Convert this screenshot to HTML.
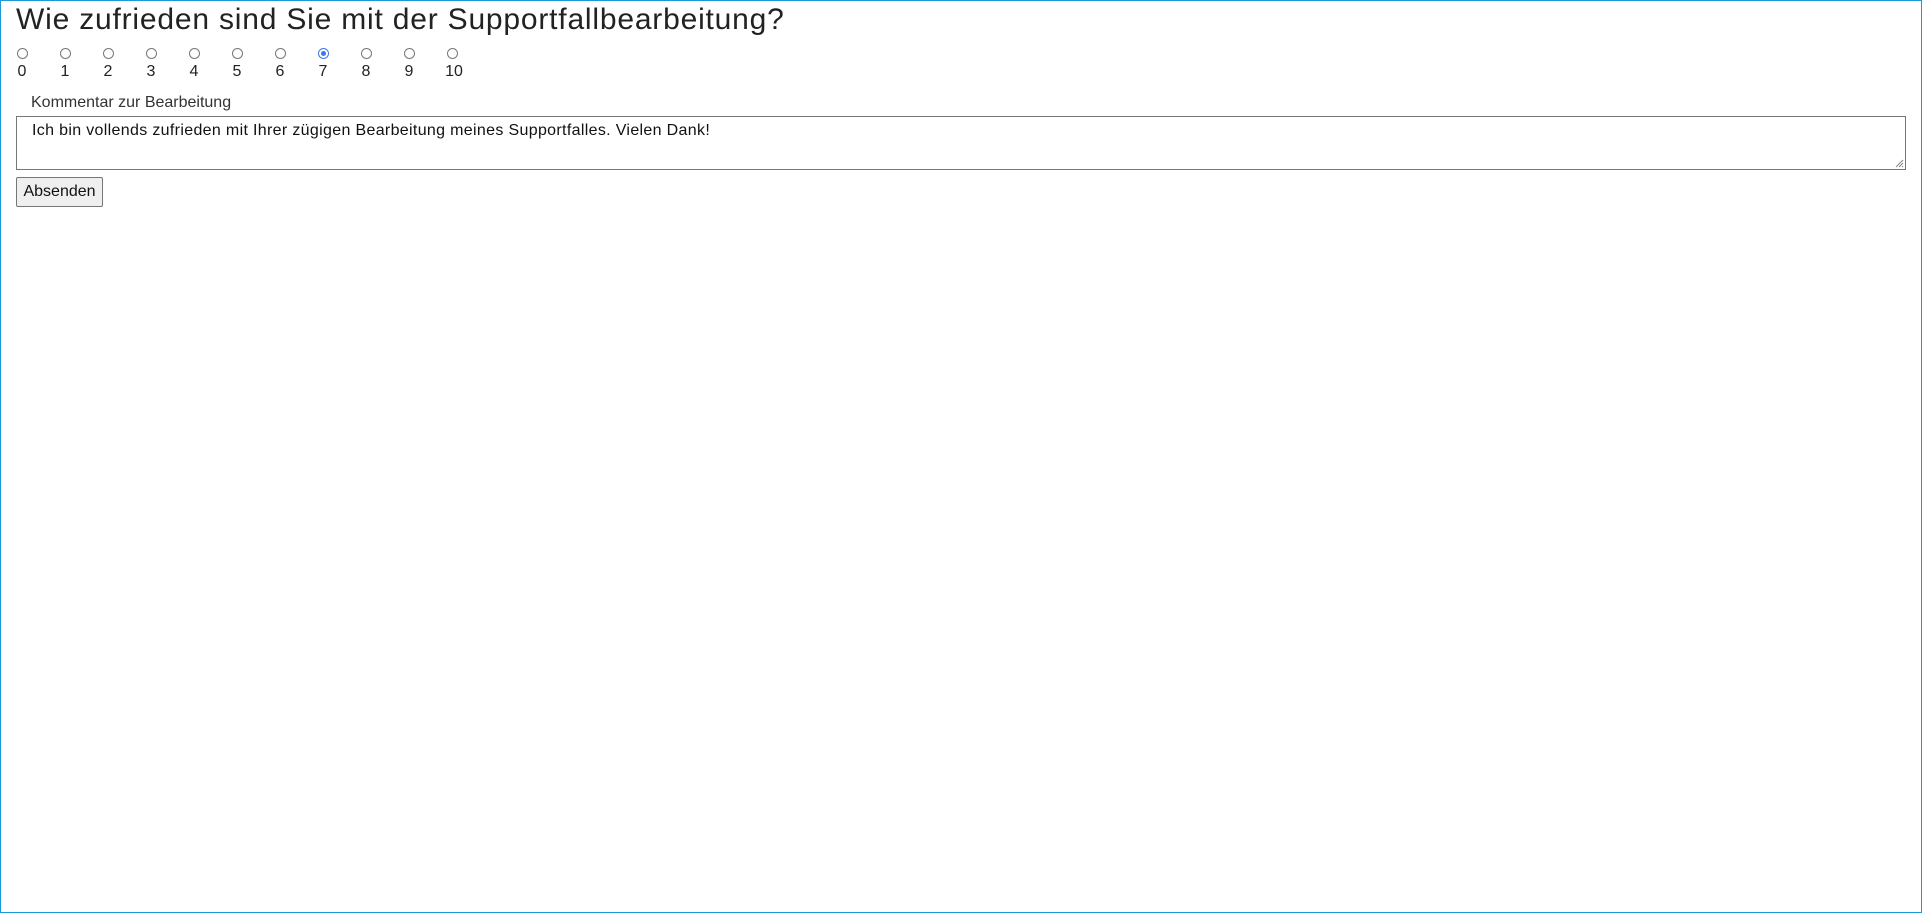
<!DOCTYPE html>
<html><head><meta charset="utf-8"><style>
html,body{margin:0;padding:0;}
body{width:1922px;height:913px;position:relative;background:#fff;font-family:"Liberation Sans",sans-serif;color:#222;overflow:hidden;}
.frame{position:absolute;left:0;top:0;width:1920px;height:911px;border:1px solid #1a9ad6;}
.t{position:absolute;white-space:nowrap;}
.r{position:absolute;width:11px;height:11px;border:1px solid #777;border-radius:50%;box-sizing:border-box;background:#fff;}
.r.on{border-color:#3b78e7;}
.r.on::after{content:"";position:absolute;left:2px;top:2px;width:5px;height:5px;border-radius:50%;background:#3b78e7;}
.n{position:absolute;top:63px;font-size:16px;width:20px;text-align:center;}
</style></head><body>
<div class="frame"></div>
<div class="t" style="left:16px;top:3px;font-size:30px;letter-spacing:0.8px;">Wie zufrieden sind Sie mit der Supportfallbearbeitung?</div>
<div class="r" style="left:17px;top:48px"></div><div class="n" style="left:12px">0</div>
<div class="r" style="left:60px;top:48px"></div><div class="n" style="left:55px">1</div>
<div class="r" style="left:103px;top:48px"></div><div class="n" style="left:98px">2</div>
<div class="r" style="left:146px;top:48px"></div><div class="n" style="left:141px">3</div>
<div class="r" style="left:189px;top:48px"></div><div class="n" style="left:184px">4</div>
<div class="r" style="left:232px;top:48px"></div><div class="n" style="left:227px">5</div>
<div class="r" style="left:275px;top:48px"></div><div class="n" style="left:270px">6</div>
<div class="r on" style="left:318px;top:48px"></div><div class="n" style="left:313px">7</div>
<div class="r" style="left:361px;top:48px"></div><div class="n" style="left:356px">8</div>
<div class="r" style="left:404px;top:48px"></div><div class="n" style="left:399px">9</div>
<div class="r" style="left:447px;top:48px"></div><div class="n" style="left:444px">10</div>
<div class="t" style="left:31px;top:94px;font-size:16px;color:#333;">Kommentar zur Bearbeitung</div>
<div style="position:absolute;left:16px;top:116px;width:1890px;height:54px;border:1px solid #767676;box-sizing:border-box;"></div>
<svg style="position:absolute;left:1895px;top:159px" width="9" height="9"><path d="M8 1L1 8M8 4L4 8M8 7L7 8" stroke="#888" stroke-width="1"/></svg>
<div class="t" style="left:32px;top:122px;font-size:16px;letter-spacing:0.33px;color:#111;">Ich bin vollends zufrieden mit Ihrer zügigen Bearbeitung meines Supportfalles. Vielen Dank!</div>
<div style="position:absolute;left:16px;top:177px;width:87px;height:30px;border:1px solid #767676;border-radius:2px;background:#efefef;box-sizing:border-box;font-size:16px;color:#111;text-align:center;line-height:28px;">Absenden</div>
</body></html>
